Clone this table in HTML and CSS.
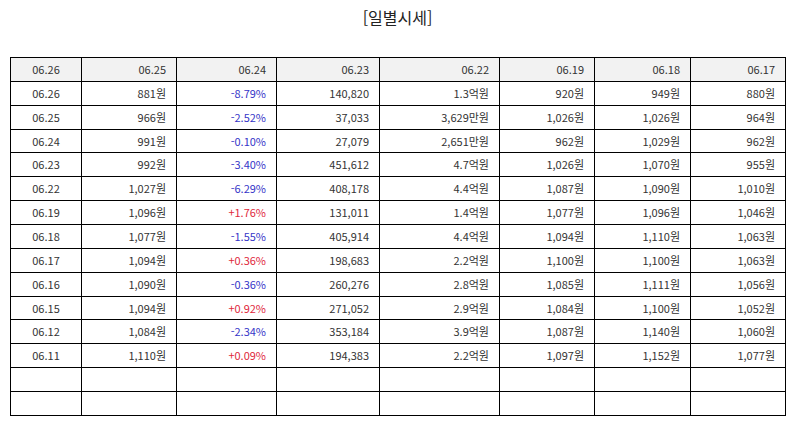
FILE: index.html
```html
<!DOCTYPE html>
<html lang="ko">
<head>
<meta charset="utf-8">
<link rel="stylesheet" href="styles.css">
</head>
<body>
<h1 class="title">[일별시세]</h1>
<table class="prices">
<colgroup>
<col class="c1"><col class="c2"><col class="c3"><col class="c4"><col class="c5"><col class="c6"><col class="c7"><col class="c8">
</colgroup>
<thead>
<tr><th class="center">06.26</th><th>06.25</th><th>06.24</th><th>06.23</th><th>06.22</th><th>06.19</th><th>06.18</th><th>06.17</th></tr>
</thead>
<tbody>
<tr><td class="center">06.26</td><td>881원</td><td class="down">-8.79%</td><td>140,820</td><td>1.3억원</td><td>920원</td><td>949원</td><td>880원</td></tr>
<tr><td class="center">06.25</td><td>966원</td><td class="down">-2.52%</td><td>37,033</td><td>3,629만원</td><td>1,026원</td><td>1,026원</td><td>964원</td></tr>
<tr><td class="center">06.24</td><td>991원</td><td class="down">-0.10%</td><td>27,079</td><td>2,651만원</td><td>962원</td><td>1,029원</td><td>962원</td></tr>
<tr><td class="center">06.23</td><td>992원</td><td class="down">-3.40%</td><td>451,612</td><td>4.7억원</td><td>1,026원</td><td>1,070원</td><td>955원</td></tr>
<tr><td class="center">06.22</td><td>1,027원</td><td class="down">-6.29%</td><td>408,178</td><td>4.4억원</td><td>1,087원</td><td>1,090원</td><td>1,010원</td></tr>
<tr><td class="center">06.19</td><td>1,096원</td><td class="up">+1.76%</td><td>131,011</td><td>1.4억원</td><td>1,077원</td><td>1,096원</td><td>1,046원</td></tr>
<tr><td class="center">06.18</td><td>1,077원</td><td class="down">-1.55%</td><td>405,914</td><td>4.4억원</td><td>1,094원</td><td>1,110원</td><td>1,063원</td></tr>
<tr><td class="center">06.17</td><td>1,094원</td><td class="up">+0.36%</td><td>198,683</td><td>2.2억원</td><td>1,100원</td><td>1,100원</td><td>1,063원</td></tr>
<tr><td class="center">06.16</td><td>1,090원</td><td class="down">-0.36%</td><td>260,276</td><td>2.8억원</td><td>1,085원</td><td>1,111원</td><td>1,056원</td></tr>
<tr><td class="center">06.15</td><td>1,094원</td><td class="up">+0.92%</td><td>271,052</td><td>2.9억원</td><td>1,084원</td><td>1,100원</td><td>1,052원</td></tr>
<tr><td class="center">06.12</td><td>1,084원</td><td class="down">-2.34%</td><td>353,184</td><td>3.9억원</td><td>1,087원</td><td>1,140원</td><td>1,060원</td></tr>
<tr><td class="center">06.11</td><td>1,110원</td><td class="up">+0.09%</td><td>194,383</td><td>2.2억원</td><td>1,097원</td><td>1,152원</td><td>1,077원</td></tr>
<tr><td></td><td></td><td></td><td></td><td></td><td></td><td></td><td></td></tr>
<tr><td></td><td></td><td></td><td></td><td></td><td></td><td></td><td></td></tr>
</tbody>
</table>
</body>
</html>
```
FILE: styles.css
```css
html, body {
  margin: 0;
  padding: 0;
  background: #ffffff;
}
body {
  padding: 0 9px 0 10px;
  font-family: "Noto Sans CJK KR", "Noto Sans", sans-serif;
  color: #333333;
}
.title {
  margin: 0;
  height: 57px;
  padding-top: 5px;
  box-sizing: border-box;
  font-size: 16px;
  font-weight: normal;
  line-height: 24px;
  text-align: center;
  color: #222222;
}
.prices {
  width: 775px;
  table-layout: fixed;
  border-collapse: collapse;
  font-size: 11px;
}
.c1 { width: 71px; }
.c2 { width: 95px; }
.c3 { width: 100px; }
.c4 { width: 103px; }
.c5 { width: 120px; }
.c6 { width: 95px; }
.c7 { width: 96px; }
.c8 { width: 95px; }
.prices tr {
  height: 23.87px;
}
.prices th,
.prices td {
  border: 1px solid #000000;
  padding: 0 10px 0 4px;
  text-align: right;
  font-weight: normal;
  line-height: 21px;
  white-space: nowrap;
}
.prices th {
  background: #f2f2f2;
}
.prices .center {
  text-align: center;
  padding: 0;
}
.down { color: #3535c8; }
.up { color: #e0283c; }
```
